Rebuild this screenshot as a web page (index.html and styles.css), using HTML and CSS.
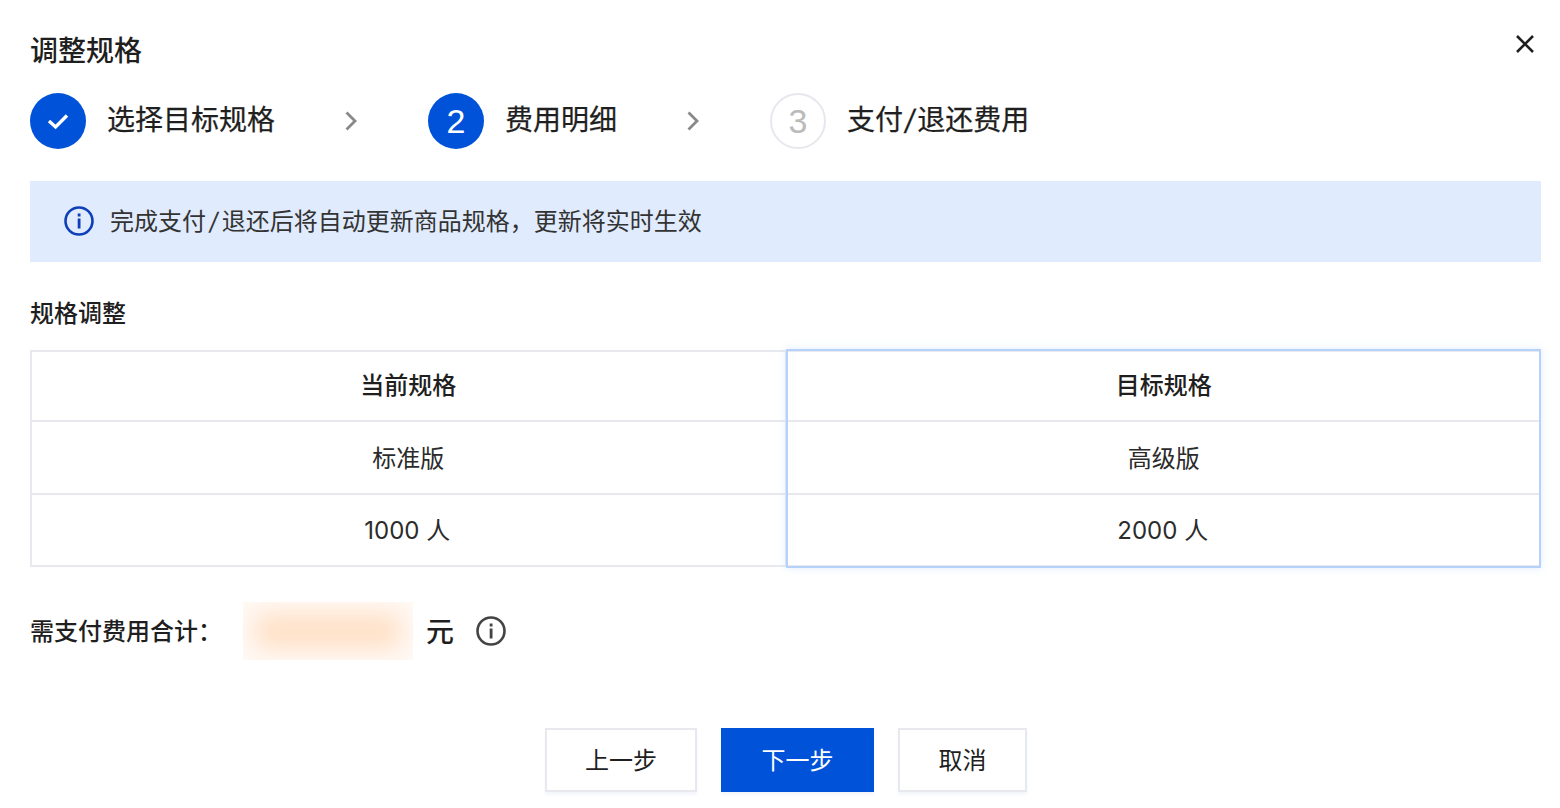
FILE: index.html
```html
<!DOCTYPE html>
<html lang="zh-CN">
<head>
<meta charset="utf-8">
<title>调整规格</title>
<link rel="stylesheet" href="styles.css">
</head>
<body>
<div class="dialog">
  <header class="head">
    <h1 class="title">调整规格</h1>
    <button class="close" aria-label="关闭"><svg width="20" height="20" viewBox="0 0 20 20"><path d="M2 2 18 18M18 2 2 18" fill="none" stroke="#1f1f1f" stroke-width="2.6"/></svg></button>
  </header>
  <ol class="steps">
    <li class="step"><span class="dot dot-on"><svg width="24" height="24" viewBox="0 0 24 24"><path d="M3 12 9.6 18 21 6.5" fill="none" stroke="#fff" stroke-width="3.4"/></svg></span><span class="step-label">选择目标规格</span></li>
    <li class="arrow"><svg width="14" height="22" viewBox="0 0 14 22"><path d="M2.5 2.5 11 11 2.5 19.5" fill="none" stroke="#888" stroke-width="2.8"/></svg></li>
    <li class="step"><span class="dot dot-on">2</span><span class="step-label">费用明细</span></li>
    <li class="arrow"><svg width="14" height="22" viewBox="0 0 14 22"><path d="M2.5 2.5 11 11 2.5 19.5" fill="none" stroke="#888" stroke-width="2.8"/></svg></li>
    <li class="step"><span class="dot dot-off">3</span><span class="step-label">支付<span class="slash slash-step">/</span>退还费用</span></li>
  </ol>
  <div class="alert">
    <svg class="alert-icon" width="30" height="30" viewBox="0 0 30 30"><circle cx="15" cy="15" r="13.5" fill="none" stroke="#0f3fb8" stroke-width="2.6"/><rect x="13.7" y="7.5" width="2.8" height="3" fill="#0f3fb8"/><rect x="13.7" y="12.5" width="2.8" height="10" fill="#0f3fb8"/></svg>
    <span class="alert-text">完成支付<span class="slash slash-alert">/</span>退还后将自动更新商品规格，更新将实时生效</span>
  </div>
  <h2 class="section">规格调整</h2>
  <div class="spec">
    <table class="spec-table">
      <thead><tr><th>当前规格</th><th class="cell-right">目标规格</th></tr></thead>
      <tbody>
        <tr class="row-first"><td>标准版</td><td class="cell-right">高级版</td></tr>
        <tr><td class="cell-num">1000 人</td><td>2000 人</td></tr>
      </tbody>
    </table>
    <div class="spec-focus"></div>
  </div>
  <div class="total">
    <span class="total-label">需支付费用合计：</span>
    <span class="blur"><span class="blur-core"></span></span>
    <span class="unit">元</span>
    <svg width="30" height="30" viewBox="0 0 30 30"><circle cx="15" cy="15" r="13.5" fill="none" stroke="#444" stroke-width="2.6"/><rect x="13.7" y="7.5" width="2.8" height="3" fill="#444"/><rect x="13.7" y="12.5" width="2.8" height="10" fill="#444"/></svg>
  </div>
  <footer class="actions">
    <button class="btn btn-first">上一步</button>
    <button class="btn btn-wide btn-primary">下一步</button>
    <button class="btn btn-narrow">取消</button>
  </footer>
</div>
</body>
</html>
```
FILE: styles.css
```css
* { box-sizing: border-box; }
html, body { margin: 0; height: 100%; background: #fff; overflow: hidden; }
body { font-family: Inter, "Noto Sans CJK SC", sans-serif; color: #1f1f1f; }
.dialog { width: 1560px; height: 808px; padding: 30px 19px 0 30px; }
.head { display: flex; justify-content: space-between; height: 42px; }
.title { margin: 0; font-size: 28px; line-height: 42px; font-weight: 500; }
.close { width: 20px; height: 20px; margin: 4px 6px 0 0; padding: 0; border: 0; background: none; display: block; }
.close svg { display: block; }
.steps { list-style: none; margin: 21px 0 0; padding: 0; display: flex; align-items: center; height: 56px; }
.step { display: flex; align-items: center; gap: 21px; }
.step-label { font-size: 28px; line-height: 40px; margin-top: -2px; -webkit-text-stroke: 0.25px #1f1f1f; }
.dot { width: 56px; height: 56px; border-radius: 50%; display: flex; align-items: center; justify-content: center; font-family: "Liberation Sans", sans-serif; font-size: 34px; flex: none; }
.dot-on { background: #0052d9; color: #fff; }
.dot-off { border: 2px solid #e7e7ee; color: #bbb; }
.slash { display: inline-block; transform: skewX(-9deg); }
.slash-step { padding: 0 2px; }
.slash-alert { padding: 0 3.5px; }
.arrow { width: 153px; display: flex; padding-left: 69px; }
.arrow svg { display: block; }
.alert { margin-top: 32px; height: 81px; background: #e0ebfd; display: flex; align-items: center; gap: 17px; padding-left: 34px; font-size: 24px; color: #333; }
.alert-icon { flex: none; margin-top: -1px; }
.alert-text { margin-top: -4px; margin-left: -1px; }
.section { margin: 34px 0 0; font-size: 24px; line-height: 36px; font-weight: 500; }
.spec { position: relative; margin-top: 18px; }
.spec-table { width: 100%; border-collapse: collapse; table-layout: fixed; font-size: 24px; }
.spec-table th, .spec-table td { border: 2px solid #e7e9ef; text-align: center; padding: 0 0 3px; }
.spec-table th { height: 70px; font-weight: 500; padding-bottom: 5px; }
.spec-table td { height: 72px; color: #2b2b2b; }
.spec-table .row-first td { height: 73px; padding-bottom: 2px; }
.spec-table .cell-right { padding-left: 2px; }
.spec-table .cell-num { padding-right: 2px; }
.spec-focus { position: absolute; top: -1px; bottom: -1px; right: 0; width: 755px; border: 2px solid #b5d2fb; box-shadow: 0 0 8px rgba(120,170,250,.22); pointer-events: none; }
.total { margin-top: 35px; height: 58px; display: flex; align-items: center; }
.total-label { width: 213px; font-size: 24px; font-weight: 500; margin-top: -4px; }
.blur { width: 170px; height: 58px; overflow: hidden; background: #fffaf6; display: block; }
.blur-core { display: block; width: 146px; height: 36px; margin: 11px 12px; background: #ffe0c6; filter: blur(12px); }
.unit { margin: -2px 22px 0 13px; font-size: 28px; font-weight: 500; }
.actions { margin: 68px 0 0 1px; display: flex; justify-content: center; gap: 24px; }
.btn { height: 64px; border: 2px solid #e7e9ef; background: #fff; font: inherit; font-size: 24px; color: #1f1f1f; box-shadow: 0 3px 3px #f4f6fb; padding: 0 0 4px; }
.btn-first { width: 152px; }
.btn-wide { width: 153px; }
.btn-narrow { width: 129px; }
.btn-primary { background: #0052d9; border-color: #0052d9; color: #fff; }
```
